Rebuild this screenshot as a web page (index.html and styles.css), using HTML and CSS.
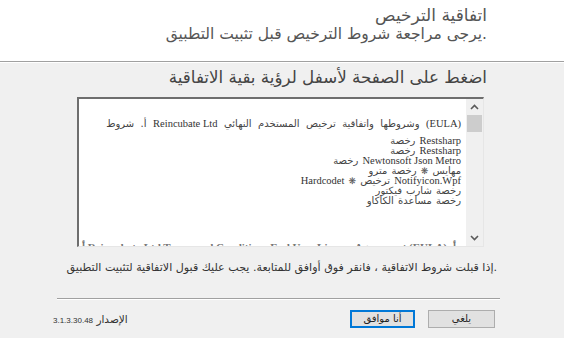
FILE: index.html
```html
<!DOCTYPE html>
<html lang="ar">
<head>
<meta charset="utf-8">
<title>اتفاقية الترخيص</title>
<link rel="stylesheet" href="styles.css">
</head>
<body>
<div class="window">
  <header class="header">
    <div class="title" dir="rtl">اتفاقية الترخيص</div>
    <div class="subtitle" dir="rtl">.يرجى مراجعة شروط الترخيص قبل تثبيت التطبيق</div>
  </header>
  <main class="main">
    <div class="heading" dir="rtl">اضغط على الصفحة لأسفل لرؤية بقية الاتفاقية</div>
    <div class="eula">
      <div class="eula-text">
        <p class="line first" dir="rtl"><span class="lat">(EULA)</span> وشروطها واتفاقية ترخيص المستخدم النهائي <span class="lat">Reincubate Ltd</span> أ. شروط</p>
        <p class="line gap" dir="rtl"><span class="lat">Restsharp</span> رخصة</p>
        <p class="line" dir="rtl"><span class="lat">Restsharp</span> رخصة</p>
        <p class="line" dir="rtl"><span class="lat">Newtonsoft Json Metro</span> رخصة</p>
        <p class="line" dir="rtl">مهايس <span class="sym">❋</span> رخصة مترو</p>
        <p class="line" dir="rtl"><span class="lat">Notifyicon.Wpf</span> ترخيص <span class="sym">❋</span> <span class="lat">Hardcodet</span></p>
        <p class="line" dir="rtl">رخصة شارب فيكتور</p>
        <p class="line" dir="rtl">رخصة مساعدة الكاكاو</p>
        <p class="line cut" dir="rtl">أ. Reincubate Ltd Terms and Conditions End User License Agreement (EULA) أ</p>
      </div>
      <div class="scrollbar">
        <svg class="arrow" width="9" height="6" viewBox="0 0 9 6"><path d="M1 5 L4.5 1.5 L8 5" fill="none" stroke="#5a5a5a" stroke-width="1.6"/></svg>
        <div class="thumb"></div>
        <div class="track"></div>
        <svg class="arrow" width="9" height="6" viewBox="0 0 9 6"><path d="M1 1 L4.5 4.5 L8 1" fill="none" stroke="#5a5a5a" stroke-width="1.6"/></svg>
      </div>
    </div>
  </main>
  <p class="note" dir="rtl">.إذا قبلت شروط الاتفاقية ، فانقر فوق أوافق للمتابعة. يجب عليك قبول الاتفاقية لتثبيت التطبيق</p>
  <div class="separator"></div>
  <footer class="footer">
    <div class="version" dir="rtl">الإصدار <span class="num">3.1.3.30.48</span></div>
    <div class="buttons">
      <button class="btn primary" type="button">أنا موافق</button>
      <button class="btn" type="button">يلغي</button>
    </div>
  </footer>
</div>
</body>
</html>
```

FILE: styles.css
```css
* { box-sizing: border-box; }
html, body { margin: 0; padding: 0; }
body {
  width: 564px;
  height: 338px;
  overflow: hidden;
  background: #f0f0f0;
  font-family: "DejaVu Sans", "Liberation Sans", sans-serif;
  color: #333;
}
.window { width: 564px; height: 338px; display: flex; flex-direction: column; }

.header {
  height: 62px;
  background: #fff;
  border-bottom: 1px solid #a0a0a0;
  box-shadow: 0 1px 0 #fff;
  padding: 6px 77px 0 60px;
  text-align: right;
}
.title { font-size: 17px; line-height: 19px; color: #555; }
.subtitle { font-size: 15.5px; line-height: 19px; color: #555; }

.main { padding: 3px 80px 0 77px; }
.heading { font-size: 16.7px; line-height: 25px; color: #444; text-align: right; margin-right: -3px; }

.eula {
  margin-top: 7px;
  height: 150px;
  display: flex;
  background: #fff;
  border-top: 2px solid #6e6e6e;
  border-left: 2px solid #6e6e6e;
  border-right: 1px solid #e6e6e6;
  border-bottom: 1px solid #e6e6e6;
  overflow: hidden;
}
.eula-text {
  flex: 1;
  padding: 20px 5px 0 0;
  font-family: "DejaVu Sans", sans-serif;
  font-size: 10px;
  word-spacing: 1px;
  color: #444;
  overflow: hidden;
}
.lat { font-family: "Liberation Serif", serif; font-size: 10.5px; color: #333; word-spacing: 0; }
.sym { font-size: 9px; color: #555; }
.line { margin: 0; line-height: 10px; height: 10px; text-align: right; white-space: nowrap; }
.line.first { word-spacing: 3.3px; }
.line.gap { margin-top: 7px; }
.line.cut {
  margin-top: 35px;
  font-family: "Liberation Serif", serif;
  font-weight: bold;
  font-size: 11px;
  word-spacing: 0;
  line-height: 12px;
  height: 12px;
  color: #777;
  text-align: left;
  padding-left: 3px;
}

.scrollbar {
  width: 17px;
  background: #f0f0f0;
  display: flex;
  flex-direction: column;
  align-items: center;
  padding: 5px 0 5px;
}
.arrow { display: block; flex: none; }
.thumb { width: 15px; height: 17px; background: #cdcdcd; margin-top: 5px; flex: none; }
.track { flex: 1; }

.note {
  margin: 13px 67px 0 60px;
  font-size: 11.1px;
  line-height: 15px;
  color: #333;
  text-align: right;
  white-space: nowrap;
}
.separator {
  margin: 23px 64px 0 57px;
  height: 2px;
  border-top: 1px solid #a0a0a0;
  border-bottom: 1px solid #fff;
}
.footer {
  margin-top: 10px;
  padding: 0 69px 0 53px;
  display: flex;
  align-items: center;
  justify-content: space-between;
  height: 18px;
}
.version { font-size: 10.5px; color: #333; white-space: nowrap; }
.num { font-family: "Liberation Sans", sans-serif; font-size: 8px; }
.buttons { display: flex; gap: 13px; }
.btn {
  height: 18px;
  padding: 0;
  font-family: "DejaVu Sans", "Liberation Sans", sans-serif;
  font-size: 10px;
  color: #222;
  background: #e1e1e1;
  border: 1px solid #adadad;
  width: 67px;
  line-height: 14px;
}
.btn.primary { width: 65px; border: 2px solid #0078d7; }
```
